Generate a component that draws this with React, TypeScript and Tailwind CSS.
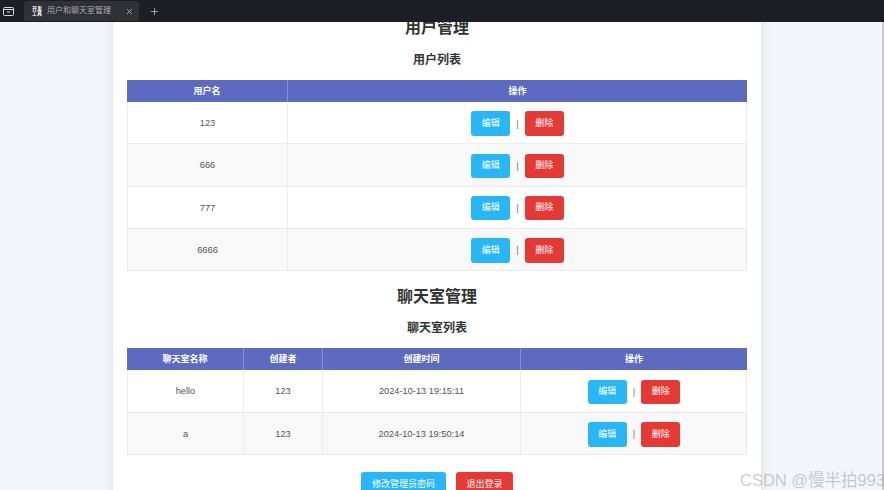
import { Plus, X } from "lucide-react";

const font = "[font-family:'Liberation_Sans','Noto_Sans_CJK_SC',sans-serif]";

const users = ["123", "666", "777", "6666"];
const rooms = [
  { name: "hello", creator: "123", time: "2024-10-13 19:15:11" },
  { name: "a", creator: "123", time: "2024-10-13 19:50:14" },
];

function ActionCell() {
  return (
    <div className="flex items-center justify-center pt-[2px] pl-[1px]">
      <button className="h-[24.5px] w-[39px] rounded-[3px] bg-[#29b6f6] text-[9px] text-white">编辑</button>
      <span className="mx-[5.75px] w-[3px] text-center text-[9.5px] text-[#777]">|</span>
      <button className="h-[24.5px] w-[39px] rounded-[3px] bg-[#e53935] text-[9px] text-white">删除</button>
    </div>
  );
}

function Th({ children }: { children: React.ReactNode }) {
  return (
    <div className="flex items-center justify-center border-r border-[#8390d8] pt-[1px] text-[9px] font-bold text-white last:border-r-0">
      {children}
    </div>
  );
}

function Td({ children }: { children: React.ReactNode }) {
  return (
    <div className="flex items-center justify-center border-r border-[#ececec] pt-[3px] text-[9.25px] text-[#555] last:border-r-0">
      {children}
    </div>
  );
}

export default function App() {
  return (
    <div className={`relative flex h-[490px] w-[884px] flex-col overflow-hidden bg-[#f4f5fa] ${font}`}>
      <div className="z-10 flex h-[22px] shrink-0 items-center bg-[#1e1e26]">
        <svg className="ml-[3px] h-[11px] w-[11px]" viewBox="0 0 11 11" fill="none" stroke="#d8d8dc" strokeWidth="1">
          <rect x="0.5" y="1.5" width="10" height="8" rx="1" />
          <path d="M0.5 3.5h10M4 6h3" />
        </svg>
        <div className="ml-[10px] flex h-[20px] w-[115px] items-center rounded-t-[4px] bg-[#2f3137] pl-[8px]">
          <div className="flex h-[10px] w-[10px] flex-col items-center justify-center text-[5px] leading-[5px] font-bold whitespace-nowrap text-white">
            <span>开发</span>
            <span>工具</span>
          </div>
          <span className="ml-[5px] w-[72px] truncate text-[8px] text-[#a9aab0]">用户和聊天室管理</span>
          <X className="ml-[6px] h-[9px] w-[9px] text-[#c8c8cc]" strokeWidth={2} />
        </div>
        <Plus className="ml-[10px] h-[11px] w-[11px] text-[#d8d8dc]" strokeWidth={1.5} />
      </div>

      <main className="mx-auto -mt-[22px] h-[512px] w-[648px] shrink-0 -translate-x-[5px] bg-white px-[14px] pt-[17px] shadow-[0_0_12px_rgba(0,0,0,0.1)]">
        <h2 className="text-center text-[16px] leading-[22px] font-bold text-[#333]">用户管理</h2>
        <h3 className="mt-[11px] text-center text-[12px] leading-[20px] font-bold text-[#333]">用户列表</h3>

        <div className="mt-[10px] w-[620px]">
          <div className="grid h-[22px] grid-cols-[161px_1fr] bg-[#5c6bc0]">
            <Th>用户名</Th>
            <Th>操作</Th>
          </div>
          {users.map((user, i) => (
            <div
              key={user}
              className={`grid h-[42.25px] grid-cols-[160px_1fr] border-x border-b border-[#ececec] ${i % 2 ? "bg-[#f8f8f8]" : "bg-white"}`}
            >
              <Td>{user}</Td>
              <ActionCell />
            </div>
          ))}
        </div>

        <h2 className="mt-[15px] text-center text-[16px] leading-[22px] font-bold text-[#333]">聊天室管理</h2>
        <h3 className="mt-[10px] text-center text-[12px] leading-[20px] font-bold text-[#333]">聊天室列表</h3>

        <div className="mt-[10px] w-[620px]">
          <div className="grid h-[22px] grid-cols-[117px_79px_198px_1fr] bg-[#5c6bc0]">
            <Th>聊天室名称</Th>
            <Th>创建者</Th>
            <Th>创建时间</Th>
            <Th>操作</Th>
          </div>
          {rooms.map((room, i) => (
            <div
              key={room.time}
              className={`grid h-[42.5px] grid-cols-[116px_79px_198px_1fr] border-x border-b border-[#ececec] ${i % 2 ? "bg-[#f8f8f8]" : "bg-white"}`}
            >
              <Td>{room.name}</Td>
              <Td>{room.creator}</Td>
              <Td>{room.time}</Td>
              <ActionCell />
            </div>
          ))}
        </div>

        <div className="mt-[17px] flex justify-center gap-[10px]">
          <button className="h-[25px] w-[85px] rounded-[3px] bg-[#29b6f6] text-[9px] text-white">修改管理员密码</button>
          <button className="h-[25px] w-[57px] rounded-[3px] bg-[#e53935] text-[9px] text-white">退出登录</button>
        </div>
      </main>

      <div className="absolute top-[22px] right-0 bottom-0 w-[2px] bg-[#c9c9cc]" />
      <span className="absolute right-0 bottom-[1px] w-[144px] overflow-hidden text-[16.5px] leading-[18px] whitespace-nowrap text-[#9a9a9a]/50">
        CSDN @慢半拍993
      </span>
    </div>
  );
}
